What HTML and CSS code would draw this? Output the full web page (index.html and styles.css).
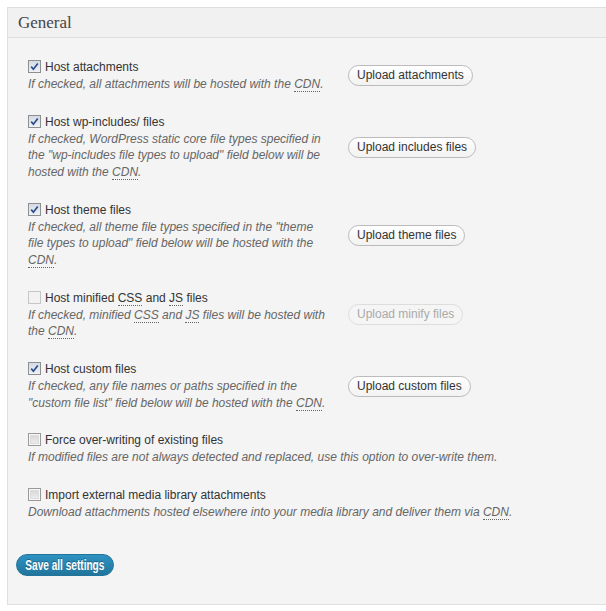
FILE: index.html
```html
<!DOCTYPE html>
<html>
<head>
<meta charset="utf-8">
<link rel="stylesheet" href="styles.css">
</head>
<body>
<div class="box">
  <h3 class="box-title">General</h3>
  <div class="box-body">
    <div class="rows">
      <div class="opt">
        <div class="label"><span class="cb on"><svg viewBox="0 0 11 11" width="11" height="11"><path d="M2.2 5.6 L4.4 8.2 L8.8 2.4" fill="none" stroke="#2a4d8c" stroke-width="1.7"/></svg></span>Host attachments</div>
        <div class="desc">If checked, all attachments will be hosted with the <abbr>CDN</abbr>.</div>
      </div>
      <div class="act"><button class="btn">Upload attachments</button></div>

      <div class="opt">
        <div class="label"><span class="cb on"><svg viewBox="0 0 11 11" width="11" height="11"><path d="M2.2 5.6 L4.4 8.2 L8.8 2.4" fill="none" stroke="#2a4d8c" stroke-width="1.7"/></svg></span>Host wp-includes/ files</div>
        <div class="desc">If checked, WordPress static core file types specified in the "wp-includes file types to upload" field below will be hosted with the <abbr>CDN</abbr>.</div>
      </div>
      <div class="act"><button class="btn">Upload includes files</button></div>

      <div class="opt">
        <div class="label"><span class="cb on"><svg viewBox="0 0 11 11" width="11" height="11"><path d="M2.2 5.6 L4.4 8.2 L8.8 2.4" fill="none" stroke="#2a4d8c" stroke-width="1.7"/></svg></span>Host theme files</div>
        <div class="desc">If checked, all theme file types specified in the "theme file types to upload" field below will be hosted with the <abbr>CDN</abbr>.</div>
      </div>
      <div class="act"><button class="btn">Upload theme files</button></div>

      <div class="opt">
        <div class="label"><span class="cb flat"></span>Host minified <abbr>CSS</abbr> and <abbr>JS</abbr> files</div>
        <div class="desc">If checked, minified <abbr>CSS</abbr> and <abbr>JS</abbr> files will be hosted with the <abbr>CDN</abbr>.</div>
      </div>
      <div class="act"><button class="btn disabled" disabled>Upload minify files</button></div>

      <div class="opt">
        <div class="label"><span class="cb on"><svg viewBox="0 0 11 11" width="11" height="11"><path d="M2.2 5.6 L4.4 8.2 L8.8 2.4" fill="none" stroke="#2a4d8c" stroke-width="1.7"/></svg></span>Host custom files</div>
        <div class="desc">If checked, any file names or paths specified in the "custom file list" field below will be hosted with the <abbr>CDN</abbr>.</div>
      </div>
      <div class="act"><button class="btn">Upload custom files</button></div>

      <div class="opt wide">
        <div class="label"><span class="cb off"></span>Force over-writing of existing files</div>
        <div class="desc">If modified files are not always detected and replaced, use this option to over-write them.</div>
      </div>

      <div class="opt wide">
        <div class="label"><span class="cb off"></span>Import external media library attachments</div>
        <div class="desc">Download attachments hosted elsewhere into your media library and deliver them via <abbr>CDN</abbr>.</div>
      </div>
    </div>
    <div class="submit"><button class="btn-primary"><span class="narrow">Save all settings</span></button></div>
  </div>
</div>
</body>
</html>
```

FILE: styles.css
```css
html, body {
  margin: 0;
  padding: 0;
  background: #ffffff;
}
body {
  padding: 7px 0 0 7px;
  overflow: hidden;
  font-family: "Liberation Sans", Arial, sans-serif;
  font-size: 12px;
  color: #333;
}
.box {
  width: 620px;
  border: 1px solid #dfdfdf;
  background: #f4f4f4;
  box-sizing: border-box;
}
.box-title {
  margin: 0;
  height: 29px;
  line-height: 29px;
  padding: 0 10px;
  background: #f1f1f1;
  border-bottom: 1px solid #dfdfdf;
  font-family: "Liberation Serif", Georgia, serif;
  font-weight: normal;
  font-size: 17px;
  color: #464646;
}
.box-body {
  padding: 21px 0 28px 20px;
}
.rows {
  display: grid;
  grid-template-columns: 300px auto;
  column-gap: 20px;
  row-gap: 21.4px;
  align-items: center;
}
.opt.wide {
  grid-column: 1 / 3;
}
.label {
  line-height: 17px;
  color: #333;
}
.desc {
  font-style: italic;
  color: #666;
  line-height: 16.5px;
}
abbr {
  text-decoration: none;
  border-bottom: 1px dotted #666;
}
.cb {
  width: 11px;
  height: 11px;
  border: 1px solid #9a9a9a;
  margin-right: 4px;
  display: inline-block;
  vertical-align: -2px;
}
.cb svg { display: block; }
.cb.on {
  background: linear-gradient(#d4dbe6, #eef1f6);
  border-color: #8e8f8f;
}
.cb.flat {
  background: #f2f2f2;
  border-color: #c6c6c6;
}
.cb.off {
  border-color: #999;
  background: #f4f4f4;
  box-shadow: inset 0 0 0 1px #f8f8f8, inset 0 0 0 2px #dcdcdc;
  background-image: linear-gradient(#d9d9d9, #ececec);
  background-size: 7px 7px;
  background-position: center;
  background-repeat: no-repeat;
}
.btn {
  font-family: "Liberation Sans", Arial, sans-serif;
  font-size: 12px;
  color: #333;
  height: 21px;
  padding: 0 8px;
  border: 1px solid #bbb;
  border-radius: 11px;
  background: linear-gradient(#ffffff, #f2f2f2);
  line-height: 19px;
  cursor: pointer;
}
.btn.disabled {
  color: #aaa;
  border-color: #ddd;
  background: #f5f5f5;
}
.submit {
  margin-top: 33px;
  margin-left: -12px;
}
.btn-primary {
  display: inline-flex;
  align-items: center;
  justify-content: center;
  overflow: visible;
  font-family: "Liberation Sans", Arial, sans-serif;
  font-weight: bold;
  font-size: 14px;
  color: #fff;
  width: 98px;
  height: 22px;
  padding: 0;
  border: 1px solid #21759b;
  border-radius: 11px;
  background: linear-gradient(#2e92c2, #21759b);
  line-height: 20px;
  white-space: nowrap;
  text-shadow: 0 -1px 0 rgba(0,0,0,0.3);
}
.narrow {
  display: block;
  flex: none;
  transform: scaleX(0.72);
  transform-origin: center;
}
```
